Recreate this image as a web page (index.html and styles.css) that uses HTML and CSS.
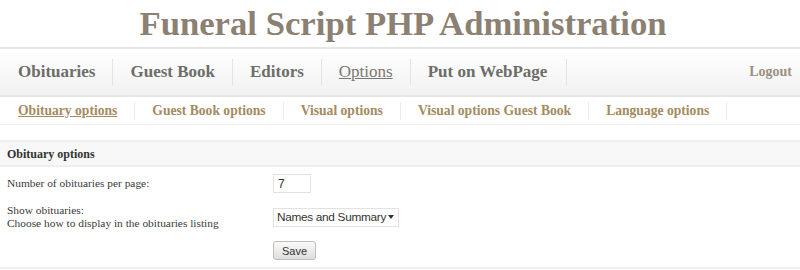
FILE: index.html
```html
<!DOCTYPE html>
<html lang="en">
<head>
    <meta charset="UTF-8">
    <title>Funeral Script PHP Administration</title>
    <link rel="stylesheet" href="styles.css">
</head>
<body>
    <h1 class="title">Funeral Script PHP Administration</h1>

    <div class="main-nav">
        <ul class="menu">
            <li><a href="#">Obituaries</a></li>
            <li><a href="#">Guest Book</a></li>
            <li><a href="#">Editors</a></li>
            <li><a href="#" class="active">Options</a></li>
            <li><a href="#">Put on WebPage</a></li>
        </ul>
        <a href="#" class="logout">Logout</a>
    </div>

    <div class="sub-nav">
        <ul class="submenu">
            <li><a href="#" class="active">Obituary options</a></li>
            <li><a href="#">Guest Book options</a></li>
            <li><a href="#">Visual options</a></li>
            <li><a href="#">Visual options Guest Book</a></li>
            <li><a href="#">Language options</a></li>
        </ul>
    </div>

    <div class="panel">
        <div class="panel-head">Obituary options</div>
        <form class="options-form">
            <div class="row">
                <label class="field-label">Number of obituaries per page:</label>
                <input type="text" class="field-input" value="7">
            </div>
            <div class="row">
                <label class="field-label">Show obituaries:<br>Choose how to display in the obituaries listing</label>
                <span class="select-wrap">
                    <select class="field-select">
                        <option>Names and Summary</option>
                        <option>Names only</option>
                    </select>
                </span>
            </div>
            <div class="row row-buttons">
                <span class="field-label"></span>
                <button type="button" class="btn-save">Save</button>
            </div>
        </form>
    </div>
</body>
</html>
```

FILE: styles.css
```css
* {
    margin: 0;
    padding: 0;
    box-sizing: border-box;
}

body {
    font-family: "Liberation Serif", "DejaVu Serif", serif;
    background: #fff;
    color: #333;
    width: 800px;
    height: 270px;
    overflow: hidden;
}

a {
    text-decoration: none;
}

ul {
    list-style: none;
}

.title {
    text-align: center;
    font-size: 34.7px;
    font-weight: 700;
    color: #8c8072;
    height: 47px;
    padding-top: 2px;
    line-height: 44px;
    padding-left: 6px;
}

/* main navigation */
.main-nav {
    display: flex;
    align-items: center;
    justify-content: space-between;
    height: 50px;
    border-top: 2px solid #e6e6e6;
    border-bottom: 2px solid #e6e6e6;
    background: linear-gradient(#fff, #f2f2f2);
    padding: 0 8px 0 0;
}

.menu {
    display: flex;
    align-items: center;
}

.menu li {
    border-right: 1px solid #e4e4e4;
    padding: 0 17px;
    height: 26px;
    display: flex;
    align-items: center;
}

.menu li:first-child {
    padding-left: 18px;
}

.menu li:last-child {
    padding-right: 19px;
}

.menu a {
    font-size: 17px;
    font-weight: 700;
    color: #6d6d6a;
}

.menu a.active {
    font-weight: 400;
    color: #7a7872;
    text-decoration: underline;
}

.logout {
    font-size: 14px;
    font-weight: 700;
    color: #9b8f80;
}

/* second level navigation */
.sub-nav {
    height: 28px;
    border-bottom: 1px solid #f0f0f0;
    display: flex;
    align-items: center;
    margin-bottom: 15px;
}

.submenu {
    display: flex;
    align-items: center;
}

.submenu li {
    border-right: 1px solid #ececec;
    padding: 0 17px;
    height: 18px;
    display: flex;
    align-items: center;
}

.submenu li:first-child {
    padding-left: 18px;
}

.submenu a {
    font-size: 13.6px;
    font-weight: 700;
    color: #a48b5f;
}

.submenu a.active {
    text-decoration: underline;
}

/* options panel */
.panel {
    border-bottom: 2px solid #efefef;
}

.panel-head {
    height: 27px;
    line-height: 25px;
    padding-left: 7px;
    background: #f8f8f8;
    border-top: 2px solid #efefef;
    border-bottom: 2px solid #efefef;
    font-size: 12px;
    font-weight: 700;
    color: #333;
}

.options-form {
    padding: 7px 0 7px 7px;
}

.row {
    display: flex;
    align-items: center;
    margin-bottom: 11px;
}

.row-buttons {
    margin-top: 11px;
    margin-bottom: 0;
}

.field-label {
    width: 266px;
    font-size: 11.4px;
    line-height: 13px;
    color: #3a3a3a;
}

.field-input {
    width: 38px;
    height: 19px;
    border: 1px solid #e2e2e2;
    font-family: "Liberation Sans", sans-serif;
    font-size: 12px;
    padding: 0 4px;
    color: #333;
}

.select-wrap {
    position: relative;
    display: inline-block;
}

.select-wrap::after {
    content: "";
    position: absolute;
    right: 5px;
    top: 8px;
    border-left: 3px solid transparent;
    border-right: 3px solid transparent;
    border-top: 4px solid #333;
    pointer-events: none;
}

.field-select {
    appearance: none;
    -webkit-appearance: none;
    width: 126px;
    height: 19px;
    border: 1px solid #e2e2e2;
    background: #fff;
    font-family: "Liberation Sans", sans-serif;
    font-size: 11.8px;
    letter-spacing: -0.3px;
    padding: 0 3px;
    color: #333;
}

.btn-save {
    width: 43px;
    height: 19px;
    border: 1px solid #bdbdbd;
    border-radius: 3px;
    background: linear-gradient(#fafafa, #dedede);
    font-family: "Liberation Sans", sans-serif;
    font-size: 11px;
    color: #333;
}
```
